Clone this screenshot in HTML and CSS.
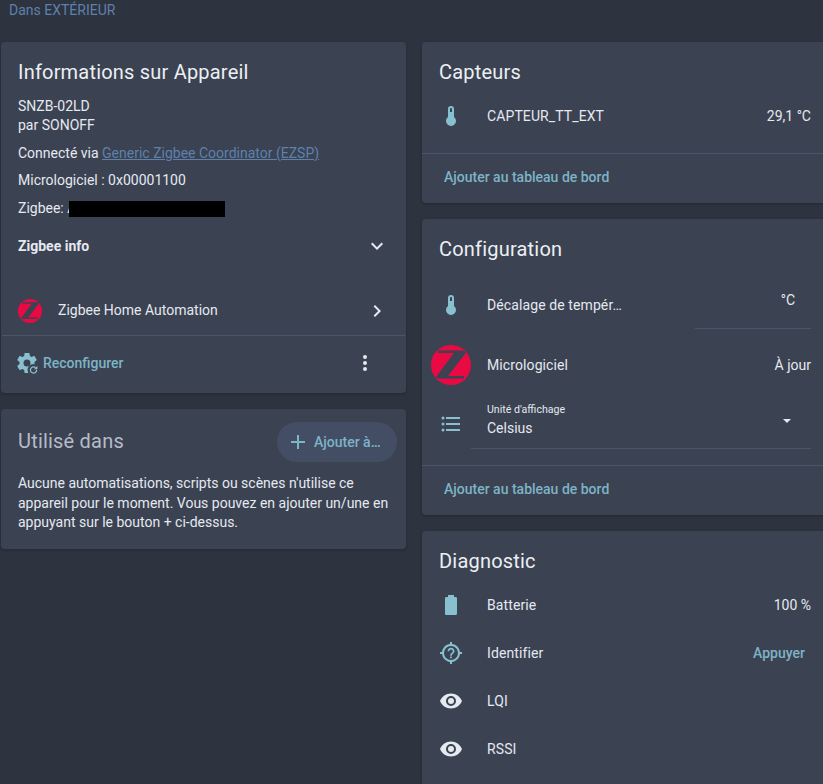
FILE: index.html
```html
<!DOCTYPE html>
<html>

<head>
    <meta charset="utf-8">
    <link rel="stylesheet" href="styles.css">
</head>

<body>

    <div class="area-line"><a href="#">Dans EXTÉRIEUR</a></div>

    <div class="columns">
        <div class="column">

            <div class="card info-card">
                <h2 class="card-title">Informations sur Appareil</h2>
                <div class="info-text">
                    <div class="model">SNZB-02LD</div>
                    <div class="maker">par SONOFF</div>
                    <div class="info-line via">Connecté via <a href="#">Generic Zigbee Coordinator (EZSP)</a></div>
                    <div class="info-line firmware">Micrologiciel : 0x00001100</div>
                    <div class="info-line zigbee-id">Zigbee: <span class="redact">A<span class="redact-bar"></span></span></div>
                </div>
                <div class="expander">
                    <span>Zigbee info</span>
                    <svg class="icon" viewBox="0 0 24 24"><path d="M7.41,8.58L12,13.17L16.59,8.58L18,10L12,16L6,10L7.41,8.58Z"/></svg>
                </div>
                <div class="integration">
                    <svg class="zigbee small" viewBox="0 0 40 40"><circle cx="20" cy="20" r="20" fill="#ea0a43"/><path class="z-cut" d="M7 5.5H33L35 7.5 17 31H33V33.5H7L5 32 23 8H7Z"/></svg>
                    <span class="integration-name">Zigbee Home Automation</span>
                    <svg class="icon" viewBox="0 0 24 24"><path d="M8.59,16.58L13.17,12L8.59,7.41L10,6L16,12L10,18L8.59,16.58Z"/></svg>
                </div>
                <div class="info-actions">
                    <svg class="icon cog" viewBox="0 0 24 24"><path d="M12,15.5A3.5,3.5 0 0,1 8.5,12A3.5,3.5 0 0,1 12,8.5A3.5,3.5 0 0,1 15.5,12A3.5,3.5 0 0,1 12,15.5M19.43,12.97C19.47,12.65 19.5,12.33 19.5,12C19.5,11.67 19.47,11.34 19.43,11L21.54,9.37C21.73,9.22 21.78,8.95 21.66,8.73L19.66,5.27C19.54,5.05 19.27,4.96 19.05,5.05L16.56,6.05C16.04,5.66 15.5,5.32 14.87,5.07L14.5,2.42C14.46,2.18 14.25,2 14,2H10C9.75,2 9.54,2.18 9.5,2.42L9.13,5.07C8.5,5.32 7.96,5.66 7.44,6.05L4.95,5.05C4.73,4.96 4.46,5.05 4.34,5.27L2.34,8.73C2.21,8.95 2.27,9.22 2.46,9.37L4.57,11C4.53,11.34 4.5,11.67 4.5,12C4.5,12.33 4.53,12.65 4.57,12.97L2.46,14.63C2.27,14.78 2.21,15.05 2.34,15.27L4.34,18.73C4.46,18.95 4.73,19.03 4.95,18.95L7.44,17.94C7.96,18.34 8.5,18.68 9.13,18.93L9.5,21.58C9.54,21.82 9.75,22 10,22H14C14.25,22 14.46,21.82 14.5,21.58L14.87,18.93C15.5,18.67 16.04,18.34 16.56,17.94L19.05,18.95C19.27,19.03 19.54,18.95 19.66,18.73L21.66,15.27C21.78,15.05 21.73,14.78 21.54,14.63L19.43,12.97Z"/><circle cx="18.5" cy="19" r="6" class="cog-cut"/><path class="cog-refresh" d="M21.6 19A3.1 3.1 0 1 1 20.6 16.7"/><path d="M22.4 14.8V18.2H19Z"/></svg>
                    <span class="text-button">Reconfigurer</span>
                    <svg class="icon dots" viewBox="0 0 24 24"><path d="M12,16A2,2 0 0,1 14,18A2,2 0 0,1 12,20A2,2 0 0,1 10,18A2,2 0 0,1 12,16M12,10A2,2 0 0,1 14,12A2,2 0 0,1 12,14A2,2 0 0,1 10,12A2,2 0 0,1 12,10M12,4A2,2 0 0,1 14,6A2,2 0 0,1 12,8A2,2 0 0,1 10,6A2,2 0 0,1 12,4Z"/></svg>
                </div>
            </div>

            <div class="card used-card">
                <div class="used-head">
                    <h2 class="card-title muted">Utilisé dans</h2>
                    <div class="add-button">
                        <svg class="icon" viewBox="0 0 24 24"><path d="M19,13H13V19H11V13H5V11H11V5H13V11H19V13Z"/></svg>
                        <span>Ajouter à…</span>
                    </div>
                </div>
                <p class="used-text">Aucune automatisations, scripts ou scènes n'utilise ce appareil pour le moment. Vous pouvez en ajouter un/une en appuyant sur le bouton + ci-dessus.</p>
            </div>

        </div>
        <div class="column">

            <div class="card">
                <h2 class="card-title">Capteurs</h2>
                <div class="rows">
                    <div class="row">
                        <svg class="icon accent" viewBox="0 0 24 24"><path d="M15 13V5A3 3 0 0 0 9 5V13A5 5 0 1 0 15 13M12 4A1 1 0 0 1 13 5V8H11V5A1 1 0 0 1 12 4Z"/></svg>
                        <span class="row-name">CAPTEUR_TT_EXT</span>
                        <span class="row-value">29,1 °C</span>
                    </div>
                </div>
                <div class="card-actions"><span class="text-button">Ajouter au tableau de bord</span></div>
            </div>

            <div class="card">
                <h2 class="card-title">Configuration</h2>
                <div class="rows config-rows">
                    <div class="row">
                        <svg class="icon accent" viewBox="0 0 24 24"><path d="M15 13V5A3 3 0 0 0 9 5V13A5 5 0 1 0 15 13M12 4A1 1 0 0 1 13 5V8H11V5A1 1 0 0 1 12 4Z"/></svg>
                        <span class="row-name">Décalage de tempér…</span>
                        <div class="number-field">°C</div>
                    </div>
                    <div class="row firmware-row">
                        <svg class="zigbee large" viewBox="0 0 40 40"><circle cx="20" cy="20" r="20" fill="#ea0a43"/><path class="z-cut" d="M7 5.5H33L35 7.5 17 31H33V33.5H7L5 32 23 8H7Z"/></svg>
                        <span class="row-name">Micrologiciel</span>
                        <span class="row-value">À jour</span>
                    </div>
                    <div class="row select-row">
                        <svg class="icon accent" viewBox="0 0 24 24"><path d="M7,5H21V7H7V5M7,13V11H21V13H7M4,4.5A1.5,1.5 0 0,1 5.5,6A1.5,1.5 0 0,1 4,7.5A1.5,1.5 0 0,1 2.5,6A1.5,1.5 0 0,1 4,4.5M4,10.5A1.5,1.5 0 0,1 5.5,12A1.5,1.5 0 0,1 4,13.5A1.5,1.5 0 0,1 2.5,12A1.5,1.5 0 0,1 4,10.5M7,19V17H21V19H7M4,16.5A1.5,1.5 0 0,1 5.5,18A1.5,1.5 0 0,1 4,19.5A1.5,1.5 0 0,1 2.5,18A1.5,1.5 0 0,1 4,16.5Z"/></svg>
                        <div class="select-field">
                            <div class="select-text">
                                <div class="select-label">Unité d'affichage</div>
                                <div class="select-value">Celsius</div>
                            </div>
                            <span class="select-arrow"></span>
                        </div>
                    </div>
                </div>
                <div class="card-actions"><span class="text-button">Ajouter au tableau de bord</span></div>
            </div>

            <div class="card">
                <h2 class="card-title">Diagnostic</h2>
                <div class="rows">
                    <div class="row">
                        <svg class="icon accent" viewBox="0 0 24 24"><path d="M16.67,4H15V2H9V4H7.33A1.33,1.33 0 0,0 6,5.33V20.67C6,21.4 6.6,22 7.33,22H16.67A1.33,1.33 0 0,0 18,20.67V5.33C18,4.6 17.4,4 16.67,4Z"/></svg>
                        <span class="row-name">Batterie</span>
                        <span class="row-value">100 %</span>
                    </div>
                    <div class="row">
                        <svg class="icon accent" viewBox="0 0 24 24"><path d="M3.05 13H1V11H3.05C3.5 6.83 6.83 3.5 11 3.05V1H13V3.05C17.17 3.5 20.5 6.83 20.95 11H23V13H20.95C20.5 17.17 17.17 20.5 13 20.95V23H11V20.95C6.83 20.5 3.5 17.17 3.05 13M12 5A7 7 0 0 0 5 12A7 7 0 0 0 12 19A7 7 0 0 0 19 12A7 7 0 0 0 12 5M11.13 17.25H12.88V15.5H11.13V17.25M12 6.75C10.07 6.75 8.5 8.32 8.5 10.25H10.25C10.25 9.28 11.03 8.5 12 8.5C12.97 8.5 13.75 9.28 13.75 10.25C13.75 12 11.13 11.78 11.13 14.63H12.88C12.88 12.66 15.5 12.44 15.5 10.25C15.5 8.32 13.93 6.75 12 6.75Z"/></svg>
                        <span class="row-name">Identifier</span>
                        <span class="text-button press">Appuyer</span>
                    </div>
                    <div class="row">
                        <svg class="icon" viewBox="0 0 24 24"><path d="M12,9A3,3 0 0,0 9,12A3,3 0 0,0 12,15A3,3 0 0,0 15,12A3,3 0 0,0 12,9M12,17A5,5 0 0,1 7,12A5,5 0 0,1 12,7A5,5 0 0,1 17,12A5,5 0 0,1 12,17M12,4.5C7,4.5 2.73,7.61 1,12C2.73,16.39 7,19.5 12,19.5C17,19.5 21.27,16.39 23,12C21.27,7.61 17,4.5 12,4.5Z"/></svg>
                        <span class="row-name">LQI</span>
                    </div>
                    <div class="row">
                        <svg class="icon" viewBox="0 0 24 24"><path d="M12,9A3,3 0 0,0 9,12A3,3 0 0,0 12,15A3,3 0 0,0 15,12A3,3 0 0,0 12,9M12,17A5,5 0 0,1 7,12A5,5 0 0,1 12,7A5,5 0 0,1 17,12A5,5 0 0,1 12,17M12,4.5C7,4.5 2.73,7.61 1,12C2.73,16.39 7,19.5 12,19.5C17,19.5 21.27,16.39 23,12C21.27,7.61 17,4.5 12,4.5Z"/></svg>
                        <span class="row-name">RSSI</span>
                    </div>
                </div>
            </div>

        </div>
    </div>

</body>

</html>
```

FILE: styles.css
```css
html, body {
    height: 784px;
    overflow: hidden;
}

body {
    margin: 0;
    background-color: #2d333f;
    color: #e5e9f0;
    font-family: Roboto, "Liberation Sans", sans-serif;
    font-size: 14px;
    line-height: 20px;
}

a {
    color: #5e81ac;
}

.area-line {
    height: 42px;
    padding-left: 9px;
}

.area-line a {
    display: block;
    text-decoration: none;
}

.columns {
    display: flex;
    gap: 16px;
    width: 826px;
    padding-left: 1px;
}

.column {
    flex: 0 0 405px;
    display: flex;
    flex-direction: column;
    gap: 16px;
}

.card {
    background-color: #3b4252;
    border-radius: 4px;
    box-shadow: 0 1px 3px rgba(0, 0, 0, 0.2);
}

.card-title {
    margin: 0;
    padding: 14px 17px 4px;
    font-size: 20px;
    font-weight: 400;
    line-height: 32px;
    letter-spacing: 0.2px;
    color: #eceff4;
}

.card-title.muted {
    padding: 0 0 2px;
    color: #b6bcc7;
}

.icon {
    flex: none;
    width: 24px;
    height: 24px;
    fill: #e5e9f0;
}

.icon.accent {
    fill: #88c0d0;
}

.text-button {
    color: #7db4c6;
    font-weight: 500;
}

/* device info */

.info-text {
    padding: 0 17px;
}

.model {
    margin-top: 4px;
}

.maker {
    margin-top: -1px;
}

.info-line {
    margin-top: 8px;
}

.info-line.firmware {
    margin-top: 7px;
}

.redact {
    position: relative;
}

.redact-bar {
    position: absolute;
    left: 2px;
    top: 1px;
    width: 156px;
    height: 16px;
    background-color: #000;
}

.expander {
    display: flex;
    align-items: center;
    justify-content: space-between;
    height: 48px;
    margin-top: 4px;
    padding: 0 17px;
    font-weight: 700;
}

.integration {
    display: flex;
    align-items: center;
    height: 48px;
    margin-top: 17px;
    padding: 0 17px;
}

.integration-name {
    flex: 1;
    margin-left: 16px;
    margin-bottom: 3px;
}

.zigbee .z-cut {
    fill: #3b4252;
}

.zigbee.small {
    flex: none;
    width: 24px;
    height: 24px;
}

.zigbee.large {
    flex: none;
    width: 40px;
    height: 40px;
    margin-left: -8px;
    margin-right: -8px;
}

.info-actions {
    display: flex;
    align-items: center;
    height: 54px;
    padding: 0 28px 3px 13px;
    border-top: 1px solid #4c566a;
    margin: 0 1px;
}

.cog {
    fill: #88c0d0;
}

.cog-cut {
    fill: #3b4252;
}

.cog-refresh {
    fill: none;
    stroke: #88c0d0;
    stroke-width: 1.3;
}

.info-actions .text-button {
    flex: 1;
    margin-left: 4px;
}

/* used in */

.used-head {
    display: flex;
    align-items: center;
    justify-content: space-between;
    padding: 13px 9px 0 17px;
}

.add-button {
    display: flex;
    align-items: center;
    width: 120px;
    height: 40px;
    box-sizing: border-box;
    padding-left: 9px;
    gap: 4px;
    border-radius: 20px;
    background-color: #434e65;
    color: #7db4c6;
    font-weight: 500;
}

.add-button .icon {
    fill: #7db4c6;
}

.used-text {
    margin: 12px 0 0;
    padding: 0 17px 16px;
    line-height: 19.6px;
}

/* entity rows */

.rows {
    padding: 0 16px 13px 17px;
}

.row {
    display: flex;
    align-items: center;
    height: 48px;
}

.row-name {
    flex: 1;
    margin-left: 24px;
    letter-spacing: 0.1px;
}

.row-value {
    text-align: right;
}

.config-rows {
    padding-top: 12px;
    padding-bottom: 16px;
}

.number-field {
    width: 116px;
    height: 47px;
    box-sizing: border-box;
    border-bottom: 1px solid #4c566a;
    padding: 8px 16px 0 0;
    text-align: right;
}

.firmware-row {
    margin-top: 12px;
}

.select-row {
    height: 50px;
    margin-top: 10px;
}

.select-field {
    flex: 1;
    display: flex;
    align-items: center;
    height: 50px;
    box-sizing: border-box;
    margin-left: 8px;
    padding-left: 16px;
    border-bottom: 1px solid #4c566a;
}

.select-text {
    flex: 1;
    margin-top: -6px;
}

.select-label {
    font-size: 10.6px;
    line-height: 14px;
}

.select-value {
    line-height: 20px;
    margin-top: 1px;
}

.select-arrow {
    width: 0;
    height: 0;
    margin-top: -5px;
    margin-right: 20px;
    border-left: 4px solid transparent;
    border-right: 4px solid transparent;
    border-top: 4px solid #e5e9f0;
}

.press {
    margin-right: 6px;
}

.card-actions {
    height: 36px;
    border-top: 1px solid #4c566a;
    padding: 13px 22px 0;
}
```
